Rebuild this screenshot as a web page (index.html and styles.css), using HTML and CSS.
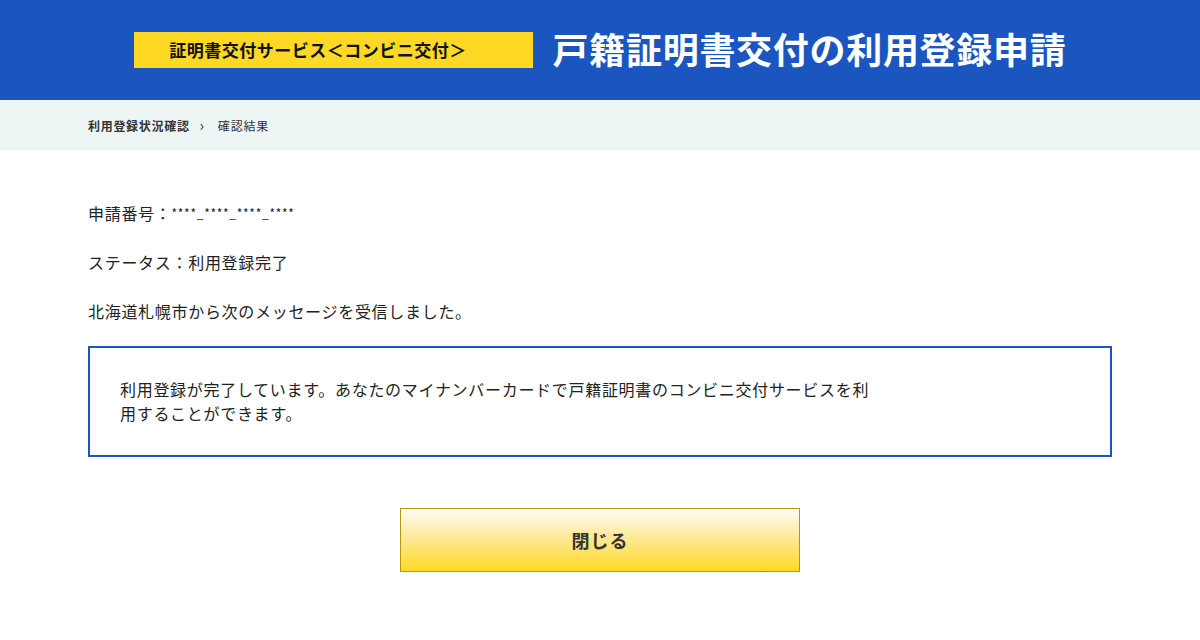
FILE: index.html
```html
<!DOCTYPE html>
<html lang="ja">
<head>
<meta charset="utf-8">
<title>戸籍証明書交付の利用登録申請</title>
<link rel="stylesheet" href="styles.css">
</head>
<body>
<header class="header">
  <div class="badge">証明書交付サービス＜コンビニ交付＞</div>
  <h1 class="title">戸籍証明書交付の利用登録申請</h1>
</header>
<nav class="crumbs">
  <div class="crumbs-inner">
    <span class="crumb-link">利用登録状況確認</span>
    <span class="crumb-sep">›</span>
    <span class="crumb-current">確認結果</span>
  </div>
</nav>
<main class="content">
  <p class="line">申請番号：<span class="mask">****_****_****_****</span></p>
  <p class="line">ステータス：利用登録完了</p>
  <p class="line">北海道札幌市から次のメッセージを受信しました。</p>
  <div class="message">
    <p class="message-text">利用登録が完了しています。あなたのマイナンバーカードで戸籍証明書のコンビニ交付サービスを利用することができます。</p>
  </div>
  <div class="actions">
    <button class="close-btn" type="button">閉じる</button>
  </div>
</main>
</body>
</html>
```

FILE: styles.css
```css
* { box-sizing: border-box; }
html, body { margin: 0; padding: 0; }
body {
  font-family: "Noto Sans CJK JP", "Noto Sans", sans-serif;
  color: #222;
  background: #fff;
}
.header {
  height: 100px;
  background: #1b55c0;
  display: flex;
  align-items: center;
  justify-content: center;
  gap: 20px;
}
.badge {
  width: 399px;
  height: 36px;
  background: #fdd824;
  color: #111;
  font-size: 17px;
  font-weight: 700;
  letter-spacing: 0.5px;
  line-height: 36px;
  text-align: center;
  padding-right: 30px;
}
.title {
  margin: 0 0 4px;
  color: #fff;
  font-size: 36px;
  font-weight: 700;
  letter-spacing: 0.7px;
  line-height: 1;
}
.crumbs {
  height: 50px;
  background: #eef6f5;
}
.crumbs-inner {
  padding: 0 88px;
  height: 50px;
  display: flex;
  align-items: center;
  font-size: 12px;
  letter-spacing: 0.7px;
  color: #333;
}
.crumb-link { font-weight: 700; }
.crumb-sep {
  margin: 0 13px 0 10px;
  font-size: 15px;
  line-height: 1;
  position: relative;
  top: -1px;
}
.crumb-current { letter-spacing: 0.8px; }
.content {
  padding: 50px 88px 0;
}
.line {
  margin: 0 0 23px;
  font-size: 16px;
  line-height: 26px;
  letter-spacing: 0.7px;
  color: #222;
}
.mask {
  font-size: 12px;
  letter-spacing: 0.7px;
  vertical-align: 2px;
}
.message {
  margin-top: -1px;
  border: 2px solid #1b55c0;
  padding: 29px 30px 30px;
}
.message-text {
  margin: 0;
  max-width: 754px;
  font-size: 16px;
  line-height: 24px;
  letter-spacing: 0.7px;
  color: #222;
}
.actions {
  display: flex;
  justify-content: center;
  margin-top: 51px;
}
.close-btn {
  width: 400px;
  height: 64px;
  border: 1px solid #b8980a;
  background: linear-gradient(to bottom, #fffdf2 0%, #fde99a 45%, #ffd923 100%);
  font-family: "Noto Sans CJK JP", "Noto Sans", sans-serif;
  font-size: 18px;
  font-weight: 700;
  letter-spacing: 1px;
  color: #333;
  cursor: pointer;
  padding: 0;
}
```
